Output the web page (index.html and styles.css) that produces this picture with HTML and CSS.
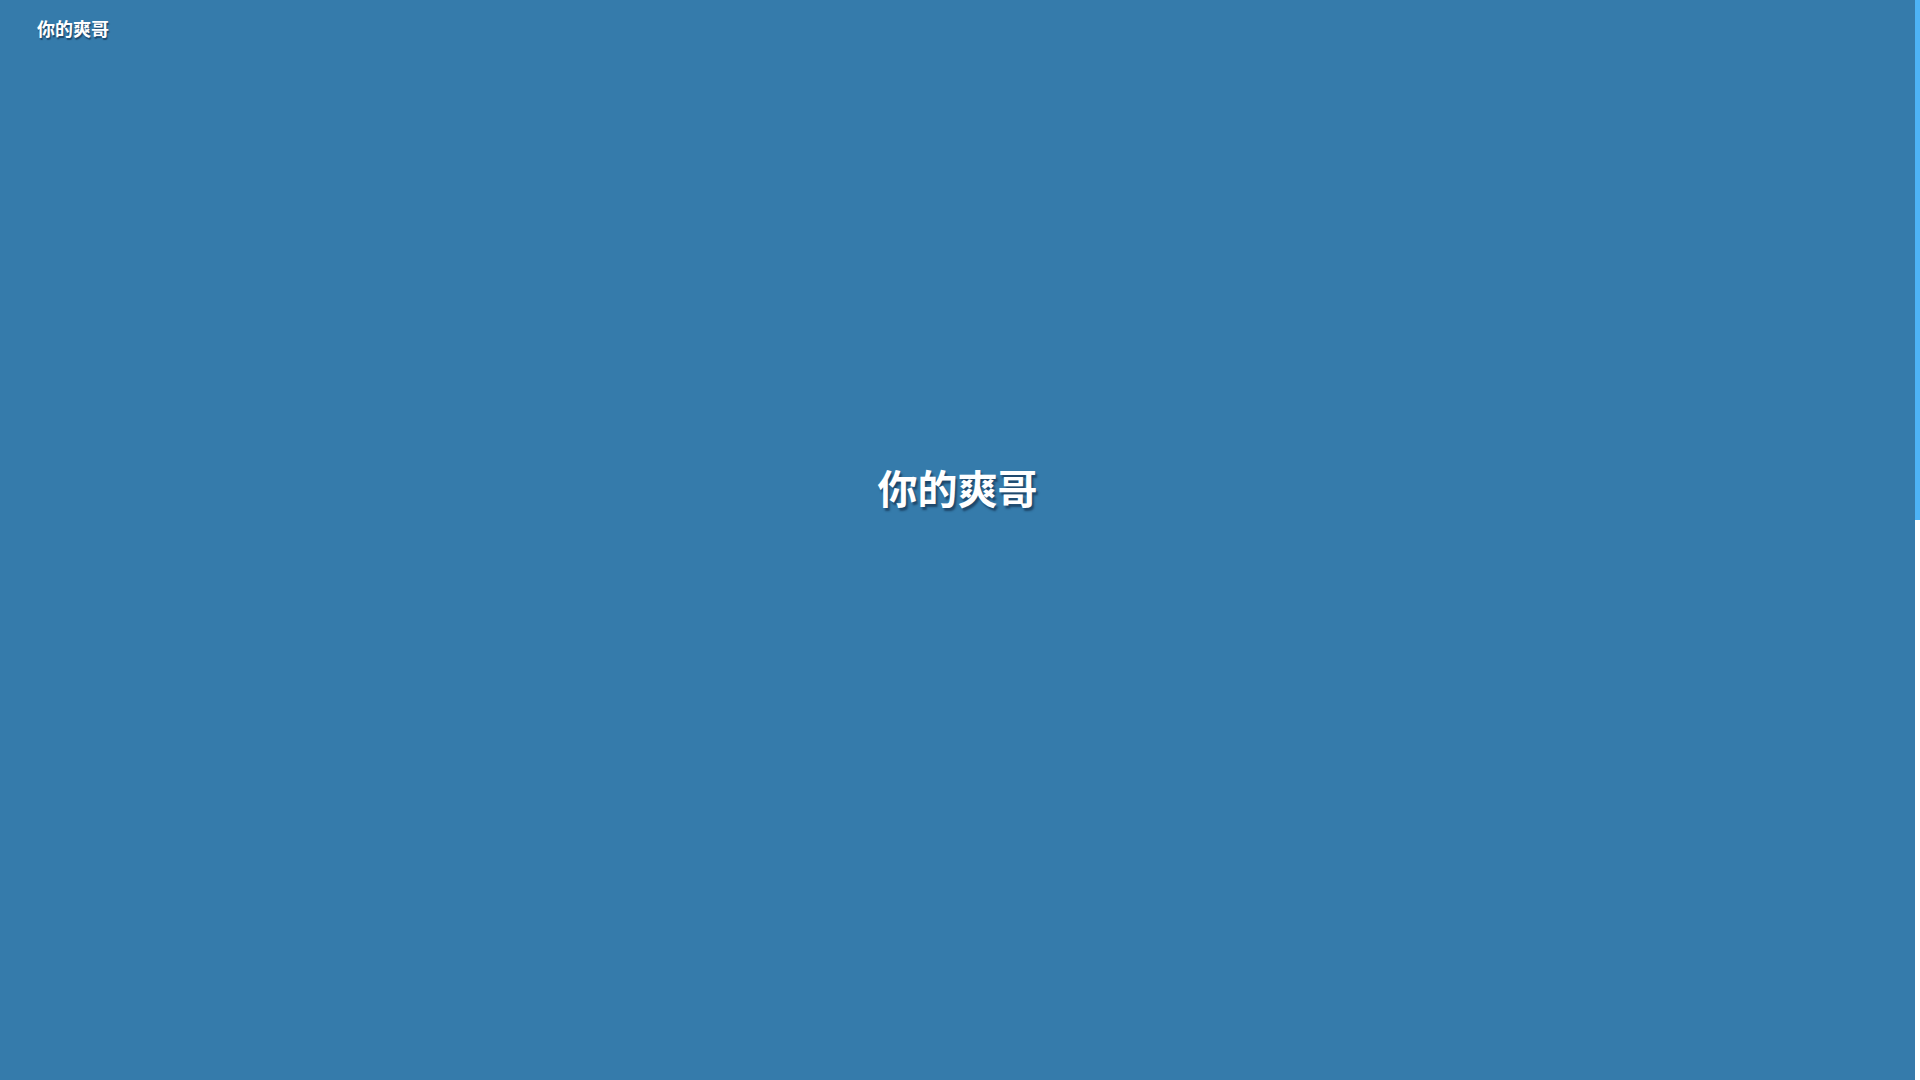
FILE: index.html
```html
<!DOCTYPE html>
<html lang="zh-CN">
<head>
<meta charset="utf-8">
<title>你的爽哥</title>
<link rel="stylesheet" href="styles.css">
</head>
<body>
<header class="topbar">
  <div class="brand">你的爽哥</div>
</header>
<main class="hero">
  <h1 class="hero-title">你的爽哥</h1>
</main>
<section class="rest"></section>
<div class="scrollbar" aria-hidden="true"><div class="scrollbar-thumb"></div></div>
</body>
</html>
```

FILE: styles.css
```css
html, body {
  margin: 0;
  padding: 0;
}
html {
  scrollbar-width: none;
}
html::-webkit-scrollbar {
  display: none;
}
body {
  background: #357bab;
  color: #ffffff;
  font-family: "Noto Sans CJK SC", "Noto Sans", sans-serif;
  margin-right: 5px;
}
.topbar {
  padding: 15px 37px 0;
  height: 45px;
  box-sizing: border-box;
}
.brand {
  font-size: 18px;
  line-height: 26px;
  font-weight: 700;
  text-shadow: 1px 2px 1px rgba(20, 50, 80, 0.7);
}
.hero {
  display: flex;
  justify-content: center;
  padding-top: 413px;
  height: 1035px;
  box-sizing: border-box;
}
.hero-title {
  margin: 0;
  font-size: 40px;
  line-height: 58px;
  font-weight: 700;
  text-shadow: 2px 3px 2px rgba(20, 50, 80, 0.7);
}
.rest {
  height: 1163px;
}
.scrollbar {
  position: fixed;
  top: 0;
  right: 0;
  width: 5px;
  height: 100vh;
  background: #ffffff;
}
.scrollbar-thumb {
  height: 520px;
  background: #4db3f6;
}
```
